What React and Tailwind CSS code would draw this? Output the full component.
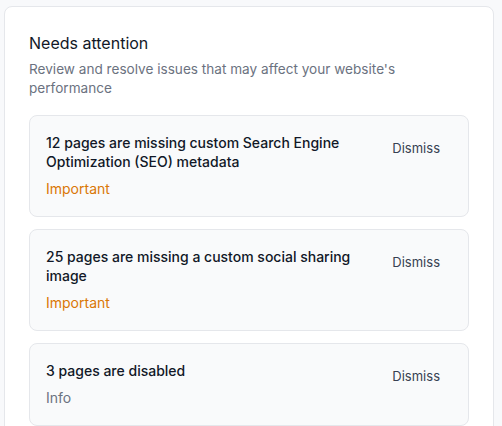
import React from "react";

const items = [
  { title: "12 pages are missing custom Search Engine Optimization (SEO) metadata", tag: "Important", tone: "text-[#d97706]" },
  { title: "25 pages are missing a custom social sharing image", tag: "Important", tone: "text-[#d97706]" },
  { title: "3 pages are disabled", tag: "Info", tone: "text-[#6b7280]" },
];

export default function App() {
  return (
    <div className="min-h-screen bg-[#f8f9fb] pt-[6px] pl-[4px] pr-[8px] overflow-hidden" style={{ fontFamily: "Inter, 'Noto Sans', sans-serif" }}>
      <div className="w-[490px] bg-white border border-[#e5e7eb] rounded-lg p-6 h-[440px]">
        <h2 className="text-[16px] leading-6 font-normal text-[#111827]">Needs attention</h2>
        <p className="mt-[5px] text-[13.6px] leading-[19px] text-[#6b7280]">
          Review and resolve issues that may affect your website's performance
        </p>
        <div className="mt-[17px] flex flex-col gap-3">
          {items.map((it, i) => (
            <div key={i} className="bg-[#f9fafb] border border-[#e5e7eb] rounded-lg px-4 pt-[17px] pb-[17px] flex items-start justify-between gap-4">
              <div className="flex-1">
                <div className="text-[14px] leading-[19px] font-medium text-[#111827] max-w-[320px]">{it.title}</div>
                <div className={`mt-[8px] text-[14px] leading-5 ${it.tone}`}>{it.tag}</div>
              </div>
              <button className="h-8 px-3 text-[13px] font-normal text-[#374151]">Dismiss</button>
            </div>
          ))}
        </div>
      </div>
    </div>
  );
}
